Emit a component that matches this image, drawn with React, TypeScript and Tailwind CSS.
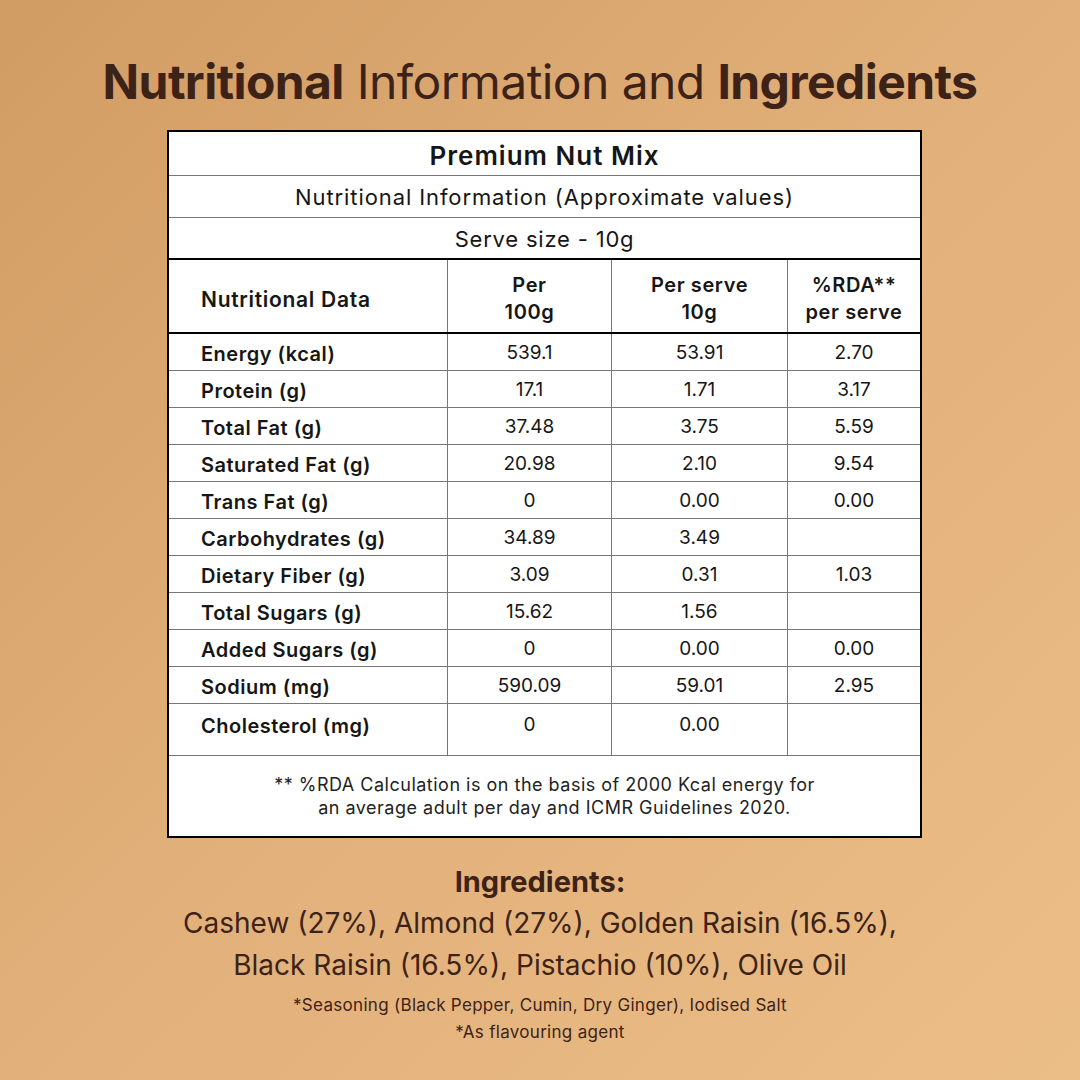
import React from 'react';

const rows = [
  { label: 'Energy (kcal)', per100: '539.1', serve: '53.91', rda: '2.70' },
  { label: 'Protein (g)', per100: '17.1', serve: '1.71', rda: '3.17' },
  { label: 'Total Fat (g)', per100: '37.48', serve: '3.75', rda: '5.59' },
  { label: 'Saturated Fat (g)', per100: '20.98', serve: '2.10', rda: '9.54' },
  { label: 'Trans Fat (g)', per100: '0', serve: '0.00', rda: '0.00' },
  { label: 'Carbohydrates (g)', per100: '34.89', serve: '3.49', rda: '' },
  { label: 'Dietary Fiber (g)', per100: '3.09', serve: '0.31', rda: '1.03' },
  { label: 'Total Sugars (g)', per100: '15.62', serve: '1.56', rda: '' },
  { label: 'Added Sugars (g)', per100: '0', serve: '0.00', rda: '0.00' },
  { label: 'Sodium (mg)', per100: '590.09', serve: '59.01', rda: '2.95' },
  { label: 'Cholesterol (mg)', per100: '0', serve: '0.00', rda: '' },
];

export default function App() {
  return (
    <div
      className="w-[1080px] h-[1080px] flex flex-col items-center bg-[linear-gradient(135deg,#d19c64_0%,#e2b07a_50%,#ecbe87_100%)] text-[#3d2217]"
      style={{ fontFamily: 'Inter, "Open Sans", sans-serif' }}
    >
      {/* Title */}
      <h1 className="mt-[52px] text-[48px] leading-[60px] tracking-[-0.6px]">
        <span className="font-bold">Nutritional</span> Information and{' '}
        <span className="font-bold">Ingredients</span>
      </h1>

      {/* Table */}
      <div className="mt-[18px] ml-[9px] w-[755px] bg-white border-2 border-black text-[#161616]">
        <div className="h-[44px] pt-[3px] flex items-center justify-center text-[26px] tracking-[1px] font-semibold border-b border-[#777]">
          Premium Nut Mix
        </div>
        <div className="h-[42px] pt-[2px] flex items-center justify-center text-[22px] tracking-[0.9px] border-b border-[#777]">
          Nutritional Information (Approximate values)
        </div>
        <div className="h-[42px] pt-[2px] flex items-center justify-center text-[22px] tracking-[0.8px] border-b-2 border-black">
          Serve size - 10g
        </div>

        <div className="grid grid-cols-[278px_164px_176px_1fr] border-b-2 border-black h-[74px] text-[20px] tracking-[0.6px] font-semibold leading-[27px]">
          <div className="flex items-center pt-[6px] pl-[32px] text-[21px] tracking-[0.7px]">Nutritional Data</div>
          <div className="flex items-center justify-center pt-[6px] text-center border-l border-[#777]">Per<br />100g</div>
          <div className="flex items-center justify-center pt-[6px] text-center border-l border-[#777]">Per serve<br />10g</div>
          <div className="flex items-center justify-center pt-[6px] text-center border-l border-[#777]">%RDA**<br />per serve</div>
        </div>

        {rows.map((r, i) => {
          const last = i === rows.length - 1;
          const cell = last ? 'h-[52px] pt-[7px]' : 'h-full pt-[3px] flex items-center justify-center';
          return (
            <div
              key={r.label}
              className={`grid grid-cols-[278px_164px_176px_1fr] text-[19px] border-b border-[#777] ${last ? 'h-[52px] items-start' : 'h-[37px] items-center'}`}
            >
              <div className={`pl-[32px] font-semibold text-[20px] tracking-[0.5px] ${last ? 'pt-[7px]' : 'pt-[3px]'}`}>{r.label}</div>
              <div className={`text-center border-l border-[#777] ${cell}`}>{r.per100}</div>
              <div className={`text-center border-l border-[#777] ${cell}`}>{r.serve}</div>
              <div className={`text-center border-l border-[#777] ${cell}`}>{r.rda}</div>
            </div>
          );
        })}

        <div className="h-[80px] flex flex-col items-center justify-center text-[18px] tracking-[0.5px] leading-[23px] text-[#222]">
          <div>** %RDA Calculation is on the basis of 2000 Kcal energy for</div>
          <div className="pl-[20px]">an average adult per day and ICMR Guidelines 2020.</div>
        </div>
      </div>

      {/* Ingredients */}
      <div className="mt-[24px] flex flex-col items-center text-center">
        <div className="text-[29px] font-bold leading-[40px]">Ingredients:</div>
        <div className="text-[28px] leading-[42px]">Cashew (27%), Almond (27%), Golden Raisin (16.5%),</div>
        <div className="text-[28px] leading-[42px]">Black Raisin (16.5%), Pistachio (10%), Olive Oil</div>
        <div className="mt-[6px] text-[17px] tracking-[0.3px] leading-[27px]">*Seasoning (Black Pepper, Cumin, Dry Ginger), Iodised Salt</div>
        <div className="text-[17px] tracking-[0.3px] leading-[27px]">*As flavouring agent</div>
      </div>
    </div>
  );
}
